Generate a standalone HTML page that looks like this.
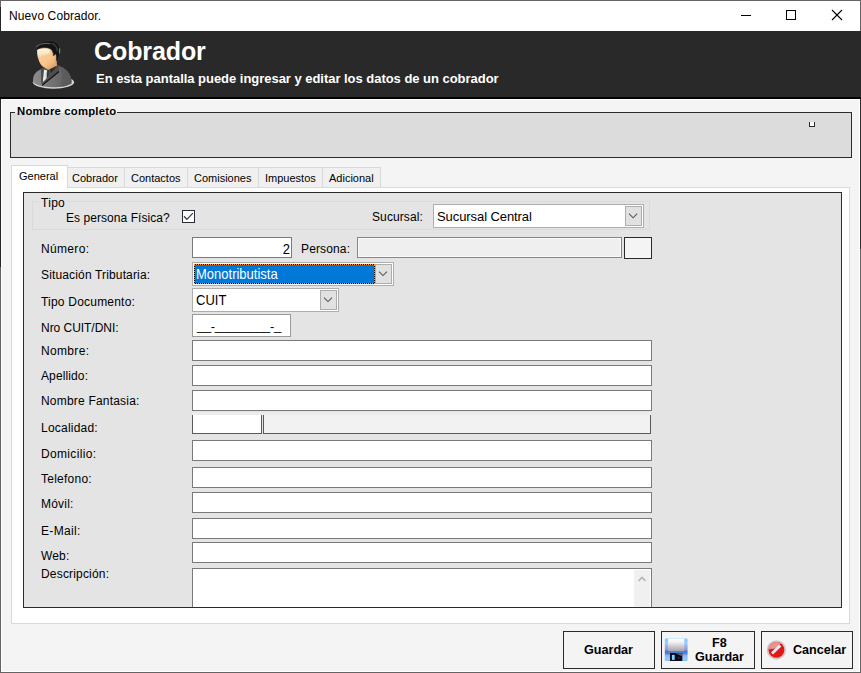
<!DOCTYPE html>
<html><head><meta charset="utf-8">
<style>
html,body{margin:0;padding:0;}
body{width:861px;height:673px;overflow:hidden;background:#f4f4f4;font-family:"Liberation Sans",sans-serif;font-size:12px;color:#000;position:relative;}
.a{position:absolute;box-sizing:border-box;}
.t{position:absolute;white-space:nowrap;line-height:14px;height:14px;}
.b{font-weight:bold;}
.tb{position:absolute;box-sizing:border-box;background:#fff;border:1px solid #7a7a7a;}
.cb{position:absolute;box-sizing:border-box;background:#fff;border:1px solid #adadad;}
.dd{position:absolute;box-sizing:border-box;background:#e1e1e1;border:1px solid #adadad;}
.btn{position:absolute;box-sizing:border-box;background:#f4f4f4;border:1px solid #2b2b2b;}
.i{font-size:13px;line-height:15px;height:15px;}
</style></head><body>
<!-- window frame -->
<div class="a" style="left:0;top:0;width:861px;height:673px;border:1px solid #646464;"></div><div class="a" style="left:1px;top:99px;width:859px;height:573px;border:1px solid #fff;"></div>
<div class="a" style="left:860px;top:99px;width:1px;height:150px;background:#2e2e2e;"></div><div class="a" style="left:0;top:7px;width:1px;height:260px;background:#262626;"></div>
<!-- title bar -->
<div class="a" style="left:1px;top:1px;width:859px;height:30px;background:#fff;"></div>
<div class="t" id="title" style="left:9px;top:9px;letter-spacing:0.1px;">Nuevo Cobrador.</div>
<svg class="a" style="left:735px;top:5px;" width="115" height="22" viewBox="0 0 115 22">
<path d="M6 10.5H16" stroke="#000" stroke-width="1" fill="none"/>
<rect x="51.5" y="5.5" width="9" height="9" stroke="#000" stroke-width="1" fill="none"/>
<path d="M97 5L107 15M107 5L97 15" stroke="#000" stroke-width="1.1" fill="none"/>
</svg>
<!-- header -->
<div class="a" style="left:0;top:31px;width:861px;height:66px;background:#292929;"></div>
<div class="a" style="left:0;top:97px;width:861px;height:2px;background:#000;"></div>
<div class="t b" id="h1" style="left:94px;top:37px;font-size:25px;letter-spacing:-0.1px;line-height:28px;height:28px;color:#fff;">Cobrador</div>
<div class="t b" id="h2" style="left:96px;letter-spacing:-0.03px;top:71px;font-size:13px;line-height:15px;height:15px;color:#fff;">En esta pantalla puede ingresar y editar los datos de un cobrador</div>
<!-- person icon -->
<svg class="a" id="person" style="left:28px;top:36px;" width="52" height="58" viewBox="0 0 52 58">
<defs>
<linearGradient id="pg1" x1="0" y1="0" x2="1" y2="0"><stop offset="0" stop-color="#8e8e8e"/><stop offset="0.45" stop-color="#747474"/><stop offset="1" stop-color="#5a5a5a"/></linearGradient>
<linearGradient id="pg2" x1="0" y1="0" x2="0" y2="1"><stop offset="0" stop-color="#fdf8e6"/><stop offset="0.7" stop-color="#f4e4bc"/><stop offset="1" stop-color="#f6d8a8"/></linearGradient>
<linearGradient id="pg3" x1="0" y1="0" x2="1" y2="1"><stop offset="0" stop-color="#fbd2a2"/><stop offset="0.6" stop-color="#f8c48c"/><stop offset="1" stop-color="#e0a068"/></linearGradient>
</defs>
<ellipse cx="25.5" cy="46.3" rx="20.6" ry="6.4" fill="#d6d6da"/>
<path d="M5.2 46.5 C4.5 40 7 36 12.5 33.6 L16 31.5 L30 29.5 C35 31 39.5 34 42 39 C43.5 42 43.8 45 43.5 47.5 C38 51 30 51.4 24 51.2 C16 51 9 49.5 5.2 46.5Z" fill="url(#pg1)"/>
<path d="M30 29.5 C35 31 39.5 34 42 39 C43.5 42 43.8 45 43.5 47.5 C40 49.8 36 50.6 32 51 C34 45 36 38 30 29.5Z" fill="#585858" opacity="0.55"/>
<path d="M13 33 L16.5 31 L19.5 34.5 L15.5 46 L13.2 47Z" fill="#4a4a4a"/>
<path d="M16 33.5 L19.3 34.5 L17.8 45 L14.8 46Z" fill="#ececec"/>
<path d="M17.5 38 L19.3 34.5 L18 45Z" fill="#b8b8b8"/>
<path d="M19.3 34 L22.5 33 L21.5 39.5 L19 42Z" fill="#2c2c38"/>
<path d="M21 33 L29 28.5 L31.5 30.5 L30.5 36 L14.5 49.3 L13.5 47.5 L20 41Z" fill="#4e4e4e"/><path d="M22 33.5 L28.8 29.5 L26 34 L22.5 37Z" fill="#2a2a2a"/>
<path d="M31 35.5 L14.2 49.3" stroke="#0c0c0c" stroke-width="1.1" fill="none"/>
<path d="M18 26 L28.5 22 L29 29.5 L20.5 33.8 L17 32Z" fill="#e2a56e"/>
<path d="M9.3 15 C9 11.5 16 10.5 22 11.5 C26.5 12.5 28.6 16 28.5 21 C28.3 25.5 25.5 29.5 21 31.8 C18 33 14.5 31 12.5 28 C10.3 24.5 9.5 19.5 9.3 15Z" fill="url(#pg3)"/>
<path d="M9.2 13.5 L21.8 11.8 L21.5 18.5 L20 16.8 L19 19.5 L17.5 17.3 L16 20.3 L14.5 18 L13 21.5 L11.5 19 L10 22.5 L9.4 18Z" fill="url(#pg2)"/>
<path d="M7.8 11.5 C8.5 7.5 14 5.2 20 4.8 C25 4.5 29.5 6 31.3 10 C32.6 13.5 32 19 29.6 25 L28.2 24.2 C28.6 21.5 28.4 19.5 27.6 18 L25.3 20 C25.5 17 24.5 14.5 22.5 13 C18.5 11 12.5 11.3 9.3 13.6Z" fill="#141414" stroke="#3e3e3e" stroke-width="0.6"/>
<path d="M8.6 10.8 C11 8 16 7 22 7.6" stroke="#5c5c5c" stroke-width="1.3" fill="none" stroke-linecap="round"/>
<path d="M23.5 7.5 C27 8 29 11 29.5 15" stroke="#3a3a3a" stroke-width="1.4" fill="none"/>
<path d="M31.6 12.5 L31.6 17.5" stroke="#9a9a9a" stroke-width="0.9" fill="none"/>
</svg>
<!-- Nombre completo group -->
<div class="a" style="left:10px;top:112px;width:842px;height:46px;background:#dcdcdc;border:1px solid #2b2b2b;"></div>
<div class="a" style="left:15px;top:106px;width:102px;height:8px;background:#f4f4f4;"></div>
<div class="a" style="left:15px;top:113px;width:102px;height:4px;background:#dcdcdc;"></div>
<div class="t b" id="nc" style="left:17px;top:104px;font-size:11.3px;letter-spacing:0.22px;">Nombre completo</div>
<div class="a" style="left:809px;top:122px;width:6px;height:5px;background:#fff;border:1px solid #2b2b2b;border-top:none;"></div>
<!-- tabs -->
<div class="a" style="left:11px;top:187px;width:839px;height:437px;background:#fff;border:1px solid #d9d9d9;"></div>
<div class="a" style="left:67px;top:167px;width:314px;height:21px;background:#f0f0f0;border:1px solid #d9d9d9;"></div>
<div class="a" style="left:124px;top:168px;width:1px;height:19px;background:#d9d9d9;"></div>
<div class="a" style="left:187px;top:168px;width:1px;height:19px;background:#d9d9d9;"></div>
<div class="a" style="left:258px;top:168px;width:1px;height:19px;background:#d9d9d9;"></div>
<div class="a" style="left:322px;top:168px;width:1px;height:19px;background:#d9d9d9;"></div>
<div class="a" style="left:11px;top:165px;width:57px;height:23px;background:#fff;border:1px solid #d9d9d9;border-bottom:none;"></div>
<div class="t" id="tab1" style="left:19px;top:169px;font-size:11px;">General</div>
<div class="t" id="tab2" style="left:72px;top:171px;font-size:11px;">Cobrador</div>
<div class="t" id="tab3" style="left:131px;top:171px;font-size:11px;">Contactos</div>
<div class="t" id="tab4" style="left:194px;top:171px;font-size:11px;">Comisiones</div>
<div class="t" id="tab5" style="left:265px;top:171px;font-size:11px;">Impuestos</div>
<div class="t" id="tab6" style="left:329px;top:171px;font-size:11px;">Adicional</div>
<!-- inner panel -->
<div class="a" style="left:23px;top:192px;width:819px;height:416px;background:#e4e4e4;border:1px solid #2b2b2b;"></div>
<!-- Tipo group -->
<div class="a" style="left:32px;top:201px;width:618px;height:29px;border:1px solid #dadada;"></div>
<div class="a" style="left:39px;top:201px;width:28px;height:1px;background:#e4e4e4;"></div>
<div class="t" id="tipo" style="left:41px;top:196px;letter-spacing:0.3px;">Tipo</div>
<div class="t" id="espf" style="left:66px;top:211px;letter-spacing:0.06px;">Es persona Física?</div>
<div class="a" style="left:182px;top:210px;width:13px;height:13px;background:#fff;border:1px solid #282c34;"></div>
<svg class="a" style="left:182px;top:210px;" width="13" height="13" viewBox="0 0 13 13"><path d="M2 6.3L4.9 9.4L10.9 3.1" stroke="#3a3a3a" stroke-width="1.25" fill="none"/></svg>
<div class="t" id="suc" style="left:372px;top:210px;letter-spacing:0.1px;">Sucursal:</div>
<div class="cb" style="left:433px;top:204px;width:211px;height:24px;"></div>
<div class="t i" id="succ" style="left:437px;top:209px;letter-spacing:-0.08px;">Sucursal Central</div>
<div class="dd" style="left:625px;top:206px;width:17px;height:20px;"></div>
<svg class="a" style="left:625px;top:206px;" width="17" height="20" viewBox="0 0 17 20"><path d="M4 7.7L8.1 11.8L12.2 7.7" stroke="#555" stroke-width="1.05" fill="none"/></svg>
<!-- rows -->
<div class="t" id="l1" style="left:41px;top:242px;letter-spacing:0.33px;">Número:</div>
<div class="tb" style="left:192px;top:237px;width:100px;height:21px;"></div>
<div class="t i" id="num2" style="left:271px;top:242px;width:19px;text-align:right;transform:scaleY(1.09);transform-origin:0 12px;">2</div>
<div class="t" id="lper" style="left:301px;top:242px;letter-spacing:0.14px;">Persona:</div>
<div class="a" style="left:357px;top:237px;width:265px;height:21px;background:#efefef;border:1px solid #868686;box-shadow:inset 0 0 0 1px #fafafa;"></div>
<div class="btn" style="left:624px;top:237px;width:28px;height:22px;background:#f4f4f4;"></div>

<div class="t" id="l2" style="left:41px;top:268px;letter-spacing:0.15px;">Situación Tributaria:</div>
<div class="cb" style="left:192px;top:262px;width:202px;height:24px;"></div>
<div class="a" style="left:194px;top:264px;width:181px;height:20px;background:#0078d7;border:1px solid #000;"></div><div class="a" style="left:194px;top:264px;width:181px;height:20px;border:1px dotted #ff9428;"></div>
<div class="t i" id="mono" style="left:196px;top:267px;color:#fff;transform:scaleY(1.09);transform-origin:0 12px;">Monotributista</div>
<div class="dd" style="left:375px;top:264px;width:17px;height:20px;"></div>
<svg class="a" style="left:375px;top:264px;" width="17" height="20" viewBox="0 0 17 20"><path d="M4 7.7L8 11.6L12 7.7" stroke="#555" stroke-width="1.05" fill="none"/></svg>

<div class="t" id="l3" style="left:41px;top:295px;letter-spacing:0.21px;">Tipo Documento:</div>
<div class="cb" style="left:192px;top:288px;width:147px;height:24px;"></div>
<div class="t i" id="cuit" style="left:196px;top:293px;transform:scaleY(1.09);transform-origin:0 12px;">CUIT</div>
<div class="dd" style="left:320px;top:290px;width:17px;height:20px;"></div>
<svg class="a" style="left:320px;top:290px;" width="17" height="20" viewBox="0 0 17 20"><path d="M4 7.7L8 11.6L12 7.7" stroke="#555" stroke-width="1.05" fill="none"/></svg>

<div class="t" id="l4" style="left:41px;top:321px;letter-spacing:-0.04px;">Nro CUIT/DNI:</div>
<div class="tb" style="left:192px;top:314px;width:99px;height:23px;border-color:#9a9a9a;"></div>
<div class="t i" id="mask" style="left:197px;top:318px;letter-spacing:-0.33px;">__<span style="position:relative;top:1px;">-</span>________<span style="position:relative;top:1px;">-</span>_</div>

<div class="t" id="l5" style="left:41px;top:344px;letter-spacing:0.33px;">Nombre:</div>
<div class="tb" style="left:192px;top:340px;width:460px;height:21px;"></div>
<div class="t" id="l6" style="left:41px;top:369px;letter-spacing:0.12px;">Apellido:</div>
<div class="tb" style="left:192px;top:365px;width:460px;height:21px;"></div>
<div class="t" id="l7" style="left:41px;top:394px;letter-spacing:0.2px;">Nombre Fantasia:</div>
<div class="tb" style="left:192px;top:390px;width:460px;height:21px;"></div>

<div class="t" id="l8" style="left:41px;top:421px;letter-spacing:0.22px;">Localidad:</div>
<div class="a" style="left:192px;top:412px;width:459px;height:3px;background:#ececec;"></div>
<div class="a" style="left:192px;top:415px;width:70px;height:19px;background:#fff;border:1px solid #5a5a5a;border-top:none;"></div>
<div class="a" style="left:263px;top:415px;width:388px;height:19px;background:#f2f2f2;border:1px solid #5a5a5a;border-top:none;"></div>

<div class="t" id="l9" style="left:41px;top:447px;letter-spacing:0.33px;">Domicilio:</div>
<div class="tb" style="left:192px;top:440px;width:460px;height:21px;"></div>
<div class="t" id="l10" style="left:41px;top:472px;letter-spacing:0.25px;">Telefono:</div>
<div class="tb" style="left:192px;top:467px;width:460px;height:21px;"></div>
<div class="t" id="l11" style="left:41px;top:497px;letter-spacing:0.2px;">Móvil:</div>
<div class="tb" style="left:192px;top:492px;width:460px;height:21px;"></div>
<div class="t" id="l12" style="left:41px;top:524px;letter-spacing:0.33px;">E-Mail:</div>
<div class="tb" style="left:192px;top:518px;width:460px;height:21px;"></div>
<div class="t" id="l13" style="left:41px;top:549px;letter-spacing:0.15px;">Web:</div>
<div class="tb" style="left:192px;top:542px;width:460px;height:21px;"></div>
<div class="t" id="l14" style="left:41px;top:567px;letter-spacing:0.18px;">Descripción:</div>
<div class="tb" style="left:192px;top:568px;width:460px;height:39px;border-bottom:none;"></div>
<div class="a" style="left:634px;top:570px;width:16px;height:37px;background:#f0f0f0;"></div>
<svg class="a" style="left:634px;top:570px;" width="16" height="16" viewBox="0 0 16 16"><path d="M4.5 11L8 7.5L11.5 11" stroke="#b6b0c4" stroke-width="1.7" fill="none"/></svg>

<!-- buttons -->
<div class="btn" style="left:563px;top:631px;width:92px;height:38px;"></div>
<div class="t b" id="b1" style="left:584px;top:643px;font-size:12.6px;">Guardar</div>
<div class="btn" style="left:661px;top:631px;width:94px;height:38px;"></div>
<svg class="a" id="floppy" style="left:664px;top:638px;" width="25" height="24" viewBox="0 0 25 24">
<defs>
<linearGradient id="g1" x1="0" y1="0" x2="0" y2="1"><stop offset="0" stop-color="#ffffff"/><stop offset="0.25" stop-color="#f4f4f6"/><stop offset="1" stop-color="#a4a2a8"/></linearGradient>
<linearGradient id="g2" x1="0" y1="0" x2="0" y2="1"><stop offset="0" stop-color="#86c8fc"/><stop offset="0.22" stop-color="#92d2ff"/><stop offset="0.36" stop-color="#a2a6ea"/><stop offset="0.5" stop-color="#8a98e2"/><stop offset="0.56" stop-color="#3a7cd6"/><stop offset="0.66" stop-color="#4a84da"/><stop offset="0.74" stop-color="#a0a4ea"/><stop offset="0.86" stop-color="#8cccff"/><stop offset="1" stop-color="#84c4fa"/></linearGradient>
</defs>
<rect x="0.8" y="0.5" width="22.8" height="22.6" rx="1.2" fill="url(#g2)"/>
<rect x="4.1" y="0.7" width="16.2" height="12.5" fill="url(#g1)"/>
<rect x="6" y="15" width="12.3" height="8" fill="#0a0a1c"/>
<path d="M11.5 15.2 L18.3 15.2 L18.3 18.2Z" fill="#6a6a6a"/>
<rect x="7.9" y="16.9" width="2.8" height="5" fill="#86ccff"/>
<rect x="14.2" y="19.2" width="1.2" height="1.2" fill="#c02030"/>
</svg>
<div class="t b" id="b2a" style="left:712px;top:636px;font-size:12.6px;">F8</div>
<div class="t b" id="b2b" style="left:695px;top:650px;font-size:12.6px;">Guardar</div>
<div class="btn" style="left:761px;top:631px;width:92px;height:38px;"></div>
<svg class="a" id="cancel" style="left:766px;top:640px;" width="21" height="21" viewBox="0 0 21 21">
<defs><clipPath id="cc"><circle cx="10.4" cy="9.95" r="7.9"/></clipPath><clipPath id="cr"><path d="M0 0H21V7.2L0 9.6Z"/></clipPath></defs>
<circle cx="10.4" cy="9.95" r="9.7" fill="#cbc8cc"/>
<circle cx="10.4" cy="9.95" r="7.9" fill="#e41616"/>
<g clip-path="url(#cr)"><path d="M-9.2 26.5L27.7 -9.5L13.7 -23.8L-23.2 12.2Z" fill="#e89494" clip-path="url(#cc)"/></g>
<path d="M4.99 12.46L13.29 4.36L15.31 6.44L7.01 14.54Z" fill="#e6ecee"/>
</svg>
<div class="t b" id="b3" style="left:793px;top:643px;font-size:12.6px;">Cancelar</div>
</body></html>
